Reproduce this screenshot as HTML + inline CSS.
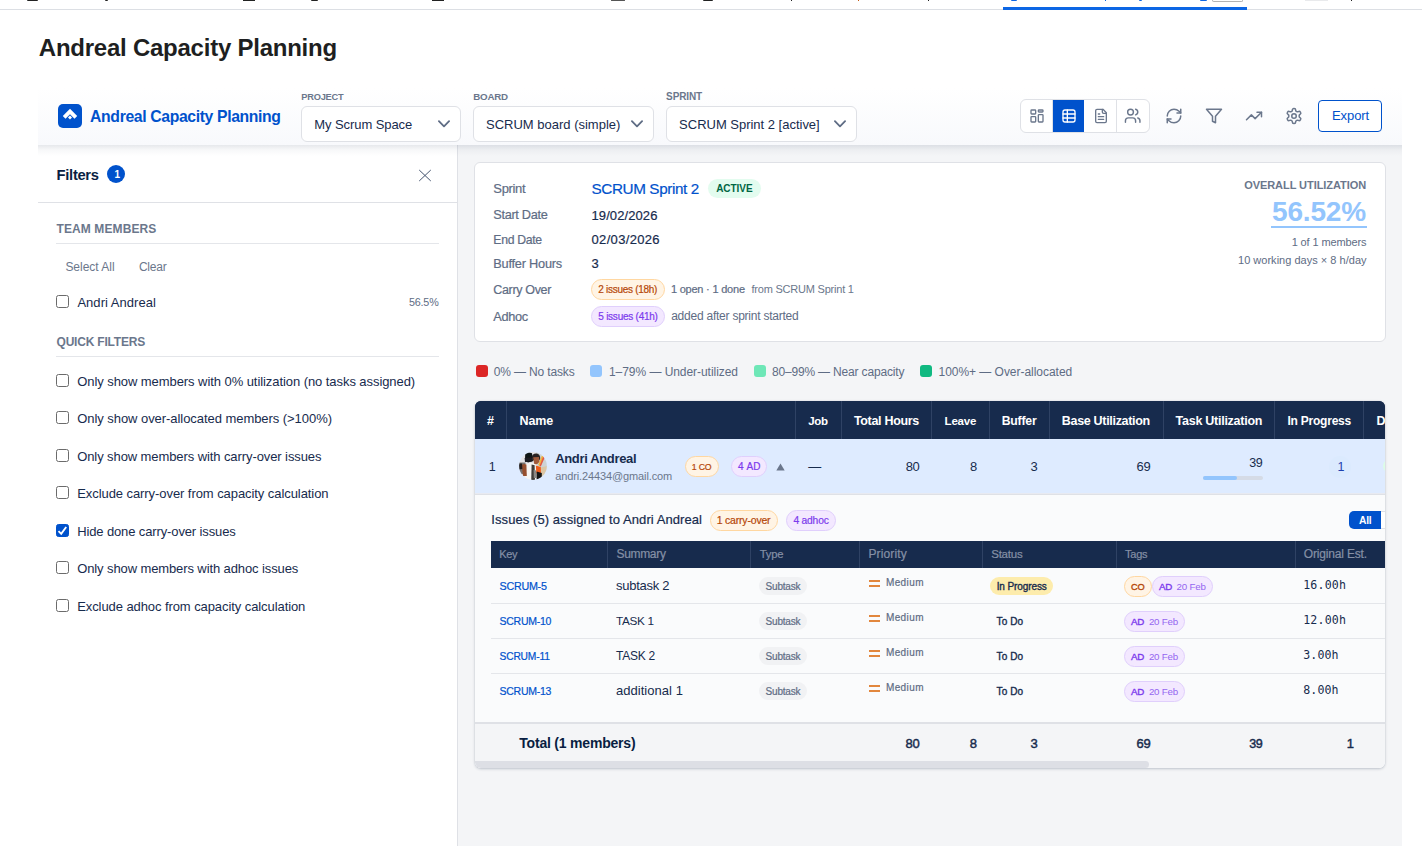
<!DOCTYPE html>
<html lang="en">
<head>
<meta charset="utf-8">
<title>Andreal Capacity Planning</title>
<style>
*{box-sizing:border-box;margin:0;padding:0}
html,body{width:1422px;height:846px;overflow:hidden;background:#fff}
body{font-family:"Liberation Sans",sans-serif;color:#172b4d;position:relative;font-size:13px}
.abs{position:absolute}
.t{position:absolute;white-space:nowrap}
#strip{left:0;top:0;width:1422px;height:10px;border-bottom:1px solid #dcdfe4;overflow:hidden}
#strip i{position:absolute;display:block;background:#222;top:0}
#tabline{left:1002.5px;top:7px;width:244.5px;height:3px;background:#0c66e4}
#toolbar{left:38px;top:88px;width:1364px;height:57px;background:linear-gradient(#fff,#f8f9fc)}
#logo{left:58px;top:104px;width:24px;height:24px;border-radius:5px;background:#0052cc}
.sel{position:absolute;top:106px;height:36px;border:1px solid #dfe1e6;border-radius:6px;background:#fff}
.sel svg{position:absolute;right:9px;top:11px}
#vgroup{left:1020px;top:99px;width:130px;height:34px;border:1px solid #dfe1e6;border-radius:6px;background:#fff;overflow:hidden}
#vgroup div{position:absolute;top:0;height:32px;width:32px;border-right:1px solid #dfe1e6}
#vgroup svg{position:absolute;left:8px;top:8px}
.ico{position:absolute;width:18px;height:18px}
svg.l{fill:none;stroke:#6b778c;stroke-width:2;stroke-linecap:round;stroke-linejoin:round}
#export{left:1318px;top:100px;width:64px;height:32px;border:1px solid #0052cc;border-radius:4px;background:#fff}
#fpanel{left:38px;top:145px;width:420px;height:701px;background:#fff;border-right:1px solid #dfe1e6}
#fhead{left:38px;top:202px;width:419px;height:1px;background:#dfe1e6}
.hr{position:absolute;left:56px;width:383px;height:1px;background:#e4e6ea}
.cb{position:absolute;left:56px;width:13px;height:13px;border:1px solid #6b6b6b;border-radius:2.5px;background:#fff}
.cb.on{background:#0052cc;border-color:#0052cc}
#content{left:458px;top:145px;width:944px;height:701px;background:#f4f5f7}
#card{left:474px;top:162px;width:912px;height:180px;background:#fff;border:1px solid #dfe1e6;border-radius:6px}
.pill{position:absolute;border-radius:11px}
.co{background:#fff4e5;border:1px solid #ffd7a1}
.ad{background:#f3e8ff;border:1px solid #e0cffc}
.sw{position:absolute;top:365px;width:12px;height:12px;border-radius:3px}
#tbl{left:475px;top:401px;width:910px;height:367px;background:linear-gradient(#172b4d 0,#172b4d 38px,#fafbfc 38px);border-radius:6px;overflow:hidden;box-shadow:0 1px 3px rgba(9,30,66,.22),0 0 1px rgba(9,30,66,.2)}
#th{left:0;top:0;width:911px;height:38px;background:#172b4d}
#th i{position:absolute;top:0;width:1px;height:38px;background:#2f4264}
#row{left:0;top:38px;width:911px;height:56px;background:linear-gradient(#deebff 0,#deebff 54px,#e8eaf1 54px,#e8eaf1 55px,#dfe1e6 55px,#dfe1e6 56px)}
#sub{left:16px;top:140px;width:895px;height:27px;background:#172b4d}
#sub i{position:absolute;top:0;width:1px;height:27px;background:#2f4264}
.ir{position:absolute;left:16px;width:895px;height:1px;background:#e4e6ea}
.ty{position:absolute;left:284px;width:48px;height:18px;border-radius:9px;background:#f1f2f4}
.eq{position:absolute;left:394px;width:11px;height:7px;border-top:2px solid #e2873d;border-bottom:2px solid #e2873d}
#tot{left:0;top:321px;width:911px;height:46px;background:#f4f5f7;border-top:2px solid #dfe1e6}
</style>
</head>
<body>
<div id="strip" class="abs">
<i style="left:27px;width:11px;height:1.2px;border-radius:0 0 6px 6px"></i>
<i style="left:104.5px;width:3px;height:1.2px;border-radius:0 0 2px 2px"></i>
<i style="left:243px;width:11.5px;height:1.0px"></i>
<i style="left:310.5px;width:7px;height:1.3px;border-radius:0 0 4px 4px"></i>
<i style="left:432px;width:11.5px;height:1.0px"></i>
<i style="left:610.5px;width:14px;height:1.3px;background:#f1f1f1;border:1px solid #555;border-top:0;border-radius:0 0 2px 2px"></i>
<i style="left:703px;width:10px;height:1.2px;border-radius:0 0 5px 5px"></i>
<i style="left:790.5px;width:1.2px;height:1.2px"></i>
<i style="left:857.5px;width:1.2px;height:1.2px;background:#c75b12"></i>
<i style="left:927.5px;width:1.2px;height:1.2px"></i>
<i style="left:1010.5px;width:6px;height:1.3px;background:#0c66e4;border-radius:0 0 3px 3px"></i>
<i style="left:1105px;width:1.3px;height:1.2px;background:#0c66e4"></i>
<i style="left:1139px;width:3px;height:1.2px;background:#0c66e4;border-radius:0 0 2px 2px"></i>
<i style="left:1199.5px;width:7px;height:1.3px;background:#0c66e4;border-radius:0 0 4px 4px"></i>
<i style="left:1211.5px;width:31px;height:1.5px;background:#fff;border:1px solid #b3b3b3;border-top:0;border-radius:0 0 3px 3px"></i>
<i style="left:1305px;width:23px;height:1.2px;background:#e9eaec"></i>
<i style="left:1351px;width:1.2px;height:1.2px"></i>
</div>
<div id="tabline" class="abs"></div>

<div id="toolbar" class="abs"></div>
<div id="logo" class="abs"><svg width="24" height="24" viewBox="0 0 24 24"><path d="M12 4.8 L19.2 12 L16.5 14.7 L12 10.2 L7.5 14.7 L4.8 12 Z" fill="#fff"/><path d="M12 11.4 L14 13.4 L12 15.4 L10 13.4 Z" fill="#fff"/></svg></div>

<div class="sel" style="left:301px;width:160px"><svg width="14" height="14" viewBox="0 0 14 14"><path d="M1.9 3.2 L7 8.4 L12.1 3.2" fill="none" stroke="#5e6c84" stroke-width="1.8" stroke-linecap="round" stroke-linejoin="round"/></svg></div>
<div class="sel" style="left:473px;width:181px"><svg width="14" height="14" viewBox="0 0 14 14"><path d="M1.9 3.2 L7 8.4 L12.1 3.2" fill="none" stroke="#5e6c84" stroke-width="1.8" stroke-linecap="round" stroke-linejoin="round"/></svg></div>
<div class="sel" style="left:666px;width:191px"><svg width="14" height="14" viewBox="0 0 14 14"><path d="M1.9 3.2 L7 8.4 L12.1 3.2" fill="none" stroke="#5e6c84" stroke-width="1.8" stroke-linecap="round" stroke-linejoin="round"/></svg></div>

<div id="vgroup" class="abs">
<div style="left:0"><svg class="l" width="16" height="16" viewBox="0 0 24 24"><rect x="3" y="3" width="7" height="6" rx="1"/><rect x="14" y="3" width="7" height="3" rx="1"/><rect x="14" y="10" width="7" height="11" rx="1"/><rect x="3" y="13" width="7" height="8" rx="1"/></svg></div>
<div style="left:32px;background:#0052cc;border-color:#0052cc;width:31px"><svg class="l" style="stroke:#fff" width="16" height="16" viewBox="0 0 24 24"><rect x="3" y="3" width="18" height="18" rx="3"/><path d="M3 9h18M3 15h18M9.5 3v18"/></svg></div>
<div style="left:64px"><svg class="l" width="16" height="16" viewBox="0 0 24 24"><path d="M15 2H6a2 2 0 0 0-2 2v16a2 2 0 0 0 2 2h12a2 2 0 0 0 2-2V7Z"/><path d="M14 2v4a2 2 0 0 0 2 2h4"/><path d="M10 9H8"/><path d="M16 13H8"/><path d="M16 17H8"/></svg></div>
<div style="left:96px;border-right:0"><svg class="l" style="left:7.3px;top:7.3px" width="17.4" height="17.4" viewBox="0 0 24 24"><path d="M16 21v-2a4 4 0 0 0-4-4H6a4 4 0 0 0-4 4v2"/><circle cx="9" cy="7" r="4"/><path d="M22 21v-2a4 4 0 0 0-3-3.87"/><path d="M16 3.13a4 4 0 0 1 0 7.75"/></svg></div>
</div>
<svg class="ico l" style="left:1165px;top:107px" viewBox="0 0 24 24"><path d="M3 12a9 9 0 0 1 9-9 9.75 9.75 0 0 1 6.74 2.74L21 8"/><path d="M21 3v5h-5"/><path d="M21 12a9 9 0 0 1-9 9 9.75 9.75 0 0 1-6.74-2.74L3 16"/><path d="M8 16H3v5"/></svg>
<svg class="ico l" style="left:1205px;top:107px" viewBox="0 0 24 24"><polygon points="22 3 2 3 10 12.46 10 19 14 21 14 12.46 22 3"/></svg>
<svg class="ico l" style="left:1245px;top:107px" viewBox="0 0 24 24"><polyline points="22 7 13.5 15.5 8.5 10.5 2 17"/><polyline points="16 7 22 7 22 13"/></svg>
<svg class="ico l" style="left:1285px;top:107px" viewBox="0 0 24 24"><path d="M12.22 2h-.44a2 2 0 0 0-2 2v.18a2 2 0 0 1-1 1.73l-.43.25a2 2 0 0 1-2 0l-.15-.08a2 2 0 0 0-2.73.73l-.22.38a2 2 0 0 0 .73 2.73l.15.1a2 2 0 0 1 1 1.72v.51a2 2 0 0 1-1 1.74l-.15.09a2 2 0 0 0-.73 2.73l.22.38a2 2 0 0 0 2.73.73l.15-.08a2 2 0 0 1 2 0l.43.25a2 2 0 0 1 1 1.73V20a2 2 0 0 0 2 2h.44a2 2 0 0 0 2-2v-.18a2 2 0 0 1 1-1.73l.43-.25a2 2 0 0 1 2 0l.15.08a2 2 0 0 0 2.73-.73l.22-.39a2 2 0 0 0-.73-2.73l-.15-.08a2 2 0 0 1-1-1.74v-.5a2 2 0 0 1 1-1.74l.15-.09a2 2 0 0 0 .73-2.73l-.22-.38a2 2 0 0 0-2.73-.73l-.15.08a2 2 0 0 1-2 0l-.43-.25a2 2 0 0 1-1-1.73V4a2 2 0 0 0-2-2z"/><circle cx="12" cy="12" r="3"/></svg>
<div id="export" class="abs"></div>

<div id="fpanel" class="abs"></div>
<div id="content" class="abs"></div>
<div class="abs" style="left:38px;top:145px;width:1364px;height:11px;background:linear-gradient(rgba(9,30,66,.10),rgba(9,30,66,.03) 45%,rgba(9,30,66,0))"></div>
<div class="abs" style="left:107px;top:165px;width:18px;height:18px;border-radius:9px;background:#0052cc"></div>
<svg class="abs" style="left:418px;top:169px" width="14" height="14" viewBox="0 0 14 14"><path d="M1.5 1.3 L12.5 11.7 M12.5 1.3 L1.5 11.7" stroke="#44546f" stroke-width="1" stroke-linecap="round"/></svg>
<div id="fhead" class="abs"></div>
<div class="hr" style="top:243px"></div>
<div class="cb" style="top:295px"></div>
<div class="hr" style="top:356px"></div>
<div class="cb" style="top:374px"></div>
<div class="cb" style="top:411px"></div>
<div class="cb" style="top:449px"></div>
<div class="cb" style="top:486px"></div>
<div class="cb on" style="top:524px"><svg style="position:absolute;left:-1px;top:-1px" width="13" height="13" viewBox="0 0 13 13"><path d="M2.5 7.2 L5.2 9.9 L10.2 3" fill="none" stroke="#fff" stroke-width="1.9" stroke-linecap="butt" stroke-linejoin="miter"/></svg></div>
<div class="cb" style="top:561px"></div>
<div class="cb" style="top:599px"></div>

<div id="card" class="abs"></div>
<div class="abs" style="left:708px;top:179px;width:53px;height:19px;border-radius:10px;background:#e3fcef"></div>
<div class="pill co" style="left:591px;top:279px;width:74px;height:21px"></div>
<div class="pill ad" style="left:591px;top:306px;width:74px;height:21px"></div>
<div class="abs" style="left:1271px;top:226px;width:96px;height:2px;background:#93c5fd"></div>

<div class="sw" style="left:476px;background:#dc2626"></div>
<div class="sw" style="left:590px;background:#93c5fd"></div>
<div class="sw" style="left:754px;background:#6ee7b7"></div>
<div class="sw" style="left:920px;background:#10b981"></div>

<div id="tbl" class="abs">
<div id="th" class="abs">
<i style="left:31px"></i><i style="left:320px"></i><i style="left:366px"></i><i style="left:456px"></i><i style="left:514px"></i><i style="left:574px"></i><i style="left:688px"></i><i style="left:799px"></i><i style="left:888px"></i>
<div class="t" style="left:901.5px;top:14px;font-size:12.5px;line-height:12.5px;font-weight:700;color:#fff">Done</div>
</div>
<div id="row" class="abs">
<svg class="abs" style="left:44px;top:13px" width="28" height="28" viewBox="0 0 28 28"><defs><clipPath id="av"><circle cx="14" cy="14" r="13.9"/></clipPath><filter id="bl" x="-20%" y="-20%" width="140%" height="140%"><feGaussianBlur stdDeviation=".75"/></filter></defs><g clip-path="url(#av)"><g filter="url(#bl)"><rect x="-4" y="-4" width="36" height="36" fill="#e4e4e7"/><rect x="17" y="-4" width="16" height="36" fill="#cdd3d5"/><path d="M20 16 L32 13 L32 32 L19 32 Z" fill="#dcc7a6"/><path d="M-2 10.5 L6.5 10.5 L6.5 21 L-2 24 Z" fill="#77726f"/><path d="M6.2 2.4 Q7 -.4 10.4 .4 L13 1.2 L14 9 L9 10.6 L6 8.8 Z" fill="#111216"/><path d="M5.6 6 L13 5.4 L13.4 9.6 L6 10 Z" fill="#1b1c20"/><path d="M12.8 5 Q13.5 1.2 17.4 1.5 Q21.6 2 21.2 7 L20 8.6 L14 8.6 Z" fill="#2a2220"/><path d="M14.2 5.2 L20 5 L20.4 9.8 Q18 13.4 15.2 12 Z" fill="#a05a3a"/><path d="M23 3.4 L25.6 5 L21.4 14.2 L19.2 13 Z" fill="#f0b43a"/><path d="M24.2 4.4 L25.8 5.2 L21.8 14.4 L20.6 13.8 Z" fill="#e2574a"/><path d="M6 12.8 Q9 10.4 13 11 L18 13 L18.4 30 L5.4 30 Z" fill="#f6f5f3"/><path d="M2.8 13 Q5 11.2 7.4 12.4 L7.8 24 L4 24 Z" fill="#96502f"/><path d="M-1 11.4 L3 11.4 L3.4 17 L-1 17.6 Z" fill="#221e1d"/><path d="M12.6 12.4 L15.6 13.2 L16 30 L12.2 30 Z" fill="#3f3c3a"/><path d="M14.6 18 L17.4 18.6 L17.4 26 L14.8 26 Z" fill="#8b8986"/><path d="M16.8 13.4 L21.8 15 L22 22.6 L17.4 21.2 Z" fill="#ee5b1d"/><path d="M17.6 19.6 L22.8 21 L22.8 28 L17.6 28 Z" fill="#121214"/></g></g></svg>
<div class="pill co" style="left:210px;top:17px;width:34px;height:21px"></div>
<div class="pill ad" style="left:256px;top:17px;width:36px;height:21px"></div>
<svg class="abs" style="left:300.5px;top:23.5px" width="9" height="8" viewBox="0 0 9 8"><path d="M4.5 0.5 L8.7 7.5 L0.3 7.5 Z" fill="#6b778c"/></svg>
<div class="abs" style="left:854px;top:16.5px;width:22px;height:22px;border-radius:11px;background:#dbeafe"></div><div class="abs" style="left:907.5px;top:20px;width:22px;height:14px;border-radius:7px;background:#dcfce7"></div><div class="abs" style="left:728px;top:37px;width:60px;height:4px;border-radius:2px;background:#d5dbe6"><div style="width:34px;height:4px;border-radius:2px;background:#93c5fd"></div></div>
</div>
<div class="pill co" style="left:235px;top:109px;width:68px;height:21px"></div>
<div class="pill ad" style="left:311px;top:109px;width:50px;height:21px"></div>
<div class="abs" style="left:874px;top:110px;width:32px;height:18px;border-radius:5px 0 0 5px;background:#0052cc"></div>
<div class="abs" style="left:906px;top:110px;width:10px;height:18px;border:1px solid #dfe1e6;border-left:0;background:#fff"></div>
<div id="sub" class="abs">
<i style="left:116px"></i><i style="left:259px"></i><i style="left:368px"></i><i style="left:491px"></i><i style="left:625px"></i><i style="left:804px"></i>
</div>
<div class="ty" style="top:176px"></div><div class="eq" style="top:179px"></div><div class="abs" style="left:515px;top:176px;width:63px;height:18px;border-radius:9px;background:#fdecac"></div><div class="pill co" style="left:649px;top:175px;width:28px;height:21px"></div><div class="pill ad" style="left:677px;top:175px;width:61px;height:21px"></div><div class="ir" style="top:202px"></div>
<div class="ty" style="top:211px"></div><div class="eq" style="top:214px"></div><div class="pill ad" style="left:649px;top:210px;width:61px;height:21px"></div><div class="ir" style="top:237px"></div>
<div class="ty" style="top:246px"></div><div class="eq" style="top:249px"></div><div class="pill ad" style="left:649px;top:245px;width:61px;height:21px"></div><div class="ir" style="top:272px"></div>
<div class="ty" style="top:281px"></div><div class="eq" style="top:284px"></div><div class="pill ad" style="left:649px;top:280px;width:61px;height:21px"></div>
<div id="tot" class="abs"></div>
<div class="abs" style="left:0;top:360px;width:674px;height:7px;background:#dddfe5;border-radius:0 4px 4px 0"></div>
</div>
<div class="t" style="left:38.80px;top:36px;font-size:24px;line-height:24px;color:#1e1f21;font-weight:700;letter-spacing:-0.241px;">Andreal Capacity Planning</div>
<div class="t" style="left:90.10px;top:109px;font-size:15.75px;line-height:15.75px;color:#0052cc;font-weight:700;letter-spacing:-0.361px;">Andreal Capacity Planning</div>
<div class="t" style="left:301.30px;top:93px;font-size:9.25px;line-height:9.25px;color:#6b778c;font-weight:700;letter-spacing:-0.234px;">PROJECT</div>
<div class="t" style="left:473.30px;top:92px;font-size:9.75px;line-height:9.75px;color:#6b778c;font-weight:700;letter-spacing:-0.233px;">BOARD</div>
<div class="t" style="left:666.10px;top:92px;font-size:10px;line-height:10px;color:#6b778c;font-weight:700;letter-spacing:-0.110px;">SPRINT</div>
<div class="t" style="left:314.30px;top:118px;font-size:13px;line-height:13px;color:#172b4d;letter-spacing:-0.077px;">My Scrum Space</div>
<div class="t" style="left:486.00px;top:118px;font-size:13px;line-height:13px;color:#172b4d;">SCRUM board (simple)</div>
<div class="t" style="left:679.10px;top:118px;font-size:13px;line-height:13px;color:#172b4d;letter-spacing:-0.012px;">SCRUM Sprint 2 [active]</div>
<div class="t" style="left:1332.00px;top:109px;font-size:13px;line-height:13px;color:#0052cc;letter-spacing:-0.074px;">Export</div>
<div class="t" style="left:56.60px;top:168px;font-size:14.75px;line-height:14.75px;color:#091e42;font-weight:700;letter-spacing:-0.308px;">Filters</div>
<div class="t" style="left:114.60px;top:170px;font-size:10px;line-height:10px;color:#fff;font-weight:700;">1</div>
<div class="t" style="left:56.50px;top:223px;font-size:12px;line-height:12px;color:#6b778c;font-weight:700;letter-spacing:0.100px;">TEAM MEMBERS</div>
<div class="t" style="left:65.40px;top:261px;font-size:12px;line-height:12px;color:#6b778c;letter-spacing:-0.020px;">Select All</div>
<div class="t" style="left:138.90px;top:261px;font-size:12px;line-height:12px;color:#6b778c;letter-spacing:-0.220px;">Clear</div>
<div class="t" style="left:77.40px;top:296px;font-size:13px;line-height:13px;color:#172b4d;letter-spacing:0.036px;">Andri Andreal</div>
<div class="t" style="left:409.00px;top:297px;font-size:10.75px;line-height:10.75px;color:#5e6c84;letter-spacing:-0.194px;">56.5%</div>
<div class="t" style="left:56.50px;top:336px;font-size:12px;line-height:12px;color:#6b778c;font-weight:700;letter-spacing:-0.198px;">QUICK FILTERS</div>
<div class="t" style="left:77.20px;top:375px;font-size:13px;line-height:13px;color:#172b4d;letter-spacing:-0.067px;">Only show members with 0% utilization (no tasks assigned)</div>
<div class="t" style="left:77.20px;top:412px;font-size:13px;line-height:13px;color:#172b4d;letter-spacing:-0.053px;">Only show over-allocated members (&gt;100%)</div>
<div class="t" style="left:77.20px;top:450px;font-size:13px;line-height:13px;color:#172b4d;letter-spacing:-0.089px;">Only show members with carry-over issues</div>
<div class="t" style="left:77.20px;top:487px;font-size:13px;line-height:13px;color:#172b4d;letter-spacing:-0.068px;">Exclude carry-over from capacity calculation</div>
<div class="t" style="left:77.20px;top:525px;font-size:13px;line-height:13px;color:#172b4d;letter-spacing:-0.125px;">Hide done carry-over issues</div>
<div class="t" style="left:77.20px;top:562px;font-size:13px;line-height:13px;color:#172b4d;letter-spacing:-0.106px;">Only show members with adhoc issues</div>
<div class="t" style="left:77.20px;top:600px;font-size:13px;line-height:13px;color:#172b4d;letter-spacing:-0.081px;">Exclude adhoc from capacity calculation</div>
<div class="t" style="left:493.30px;top:182px;font-size:13px;line-height:13px;color:#5e6c84;letter-spacing:-0.326px;-webkit-text-stroke:.2px currentColor;">Sprint</div>
<div class="t" style="left:493.30px;top:209px;font-size:12.75px;line-height:12.75px;color:#5e6c84;letter-spacing:-0.331px;-webkit-text-stroke:.2px currentColor;">Start Date</div>
<div class="t" style="left:493.30px;top:234px;font-size:12.25px;line-height:12.25px;color:#5e6c84;letter-spacing:-0.326px;-webkit-text-stroke:.2px currentColor;">End Date</div>
<div class="t" style="left:493.30px;top:258px;font-size:12.75px;line-height:12.75px;color:#5e6c84;letter-spacing:-0.221px;-webkit-text-stroke:.2px currentColor;">Buffer Hours</div>
<div class="t" style="left:493.30px;top:284px;font-size:12.5px;line-height:12.5px;color:#5e6c84;letter-spacing:-0.336px;-webkit-text-stroke:.2px currentColor;">Carry Over</div>
<div class="t" style="left:493.30px;top:311px;font-size:12.75px;line-height:12.75px;color:#5e6c84;letter-spacing:-0.337px;-webkit-text-stroke:.2px currentColor;">Adhoc</div>
<div class="t" style="left:591.50px;top:181px;font-size:15.25px;line-height:15.25px;color:#0052cc;letter-spacing:-0.384px;-webkit-text-stroke:.2px currentColor;">SCRUM Sprint 2</div>
<div class="t" style="left:716.20px;top:184px;font-size:10px;line-height:10px;color:#006644;font-weight:700;letter-spacing:-0.050px;">ACTIVE</div>
<div class="t" style="left:591.50px;top:209px;font-size:13px;line-height:13px;color:#172b4d;letter-spacing:0.093px;-webkit-text-stroke:.2px currentColor;">19/02/2026</div>
<div class="t" style="left:591.50px;top:233px;font-size:13px;line-height:13px;color:#172b4d;letter-spacing:0.337px;-webkit-text-stroke:.2px currentColor;">02/03/2026</div>
<div class="t" style="left:591.50px;top:257px;font-size:13px;line-height:13px;color:#172b4d;-webkit-text-stroke:.2px currentColor;">3</div>
<div class="t" style="left:598.30px;top:285px;font-size:10px;line-height:10px;color:#b54708;letter-spacing:-0.285px;-webkit-text-stroke:.2px currentColor;">2 issues (18h)</div>
<div class="t" style="left:598.30px;top:312px;font-size:10px;line-height:10px;color:#7c3aed;letter-spacing:-0.246px;-webkit-text-stroke:.2px currentColor;">5 issues (41h)</div>
<div class="t" style="left:670.90px;top:284px;font-size:11px;line-height:11px;color:#5e6c84;letter-spacing:-0.211px;-webkit-text-stroke:.2px currentColor;">1 open · 1 done</div>
<div class="t" style="left:751.50px;top:284px;font-size:11px;line-height:11px;color:#6b778c;letter-spacing:-0.215px;">from SCRUM Sprint 1</div>
<div class="t" style="left:671.20px;top:310px;font-size:12px;line-height:12px;color:#5e6c84;letter-spacing:-0.238px;">added after sprint started</div>
<div class="t" style="left:1244.20px;top:180px;font-size:11px;line-height:11px;color:#6b778c;font-weight:700;letter-spacing:-0.063px;">OVERALL UTILIZATION</div>
<div class="t" style="left:1272.00px;top:198px;font-size:28px;line-height:28px;color:#93c5fd;font-weight:700;letter-spacing:-0.164px;">56.52%</div>
<div class="t" style="left:1291.70px;top:237px;font-size:11px;line-height:11px;color:#5e6c84;letter-spacing:-0.123px;">1 of 1 members</div>
<div class="t" style="left:1238.00px;top:255px;font-size:11px;line-height:11px;color:#5e6c84;letter-spacing:0.017px;">10 working days × 8 h/day</div>
<div class="t" style="left:493.80px;top:366px;font-size:12px;line-height:12px;color:#5e6c84;letter-spacing:-0.148px;">0% — No tasks</div>
<div class="t" style="left:609.00px;top:366px;font-size:12px;line-height:12px;color:#5e6c84;letter-spacing:-0.051px;">1–79% — Under-utilized</div>
<div class="t" style="left:771.90px;top:366px;font-size:12px;line-height:12px;color:#5e6c84;letter-spacing:-0.170px;">80–99% — Near capacity</div>
<div class="t" style="left:938.50px;top:366px;font-size:12px;line-height:12px;color:#5e6c84;letter-spacing:-0.033px;">100%+ — Over-allocated</div>
<div class="t" style="left:487.00px;top:415px;font-size:12.5px;line-height:12.5px;color:#fff;font-weight:700;">#</div>
<div class="t" style="left:519.60px;top:415px;font-size:12.5px;line-height:12.5px;color:#fff;font-weight:700;letter-spacing:-0.154px;">Name</div>
<div class="t" style="left:808.30px;top:416px;font-size:11.5px;line-height:11.5px;color:#fff;font-weight:700;letter-spacing:-0.335px;">Job</div>
<div class="t" style="left:853.90px;top:415px;font-size:12.5px;line-height:12.5px;color:#fff;font-weight:700;letter-spacing:-0.310px;">Total Hours</div>
<div class="t" style="left:944.60px;top:416px;font-size:11.5px;line-height:11.5px;color:#fff;font-weight:700;letter-spacing:-0.201px;">Leave</div>
<div class="t" style="left:1001.70px;top:415px;font-size:12.25px;line-height:12.25px;color:#fff;font-weight:700;letter-spacing:-0.215px;">Buffer</div>
<div class="t" style="left:1061.80px;top:415px;font-size:12.5px;line-height:12.5px;color:#fff;font-weight:700;letter-spacing:-0.311px;">Base Utilization</div>
<div class="t" style="left:1175.60px;top:415px;font-size:12.5px;line-height:12.5px;color:#fff;font-weight:700;letter-spacing:-0.263px;">Task Utilization</div>
<div class="t" style="left:1287.50px;top:415px;font-size:12px;line-height:12px;color:#fff;font-weight:700;letter-spacing:-0.230px;">In Progress</div>
<div class="t" style="left:488.80px;top:461px;font-size:12.5px;line-height:12.5px;color:#172b4d;">1</div>
<div class="t" style="left:555.20px;top:452px;font-size:13px;line-height:13px;color:#172b4d;font-weight:700;letter-spacing:-0.340px;">Andri Andreal</div>
<div class="t" style="left:555.20px;top:471px;font-size:11px;line-height:11px;color:#6b778c;letter-spacing:-0.120px;">andri.24434@gmail.com</div>
<div class="t" style="left:691.70px;top:463px;font-size:8.75px;line-height:8.75px;color:#b54708;letter-spacing:-0.144px;-webkit-text-stroke:.2px currentColor;">1 CO</div>
<div class="t" style="left:738.00px;top:462px;font-size:10px;line-height:10px;color:#7c3aed;letter-spacing:0.300px;-webkit-text-stroke:.2px currentColor;">4 AD</div>
<div class="t" style="left:808.20px;top:460px;font-size:13px;line-height:13px;color:#172b4d;">—</div>
<div class="t" style="left:905.70px;top:460px;font-size:13px;line-height:13px;color:#172b4d;letter-spacing:-0.330px;">80</div>
<div class="t" style="left:969.90px;top:460px;font-size:13px;line-height:13px;color:#172b4d;">8</div>
<div class="t" style="left:1030.50px;top:460px;font-size:13px;line-height:13px;color:#172b4d;">3</div>
<div class="t" style="left:1136.60px;top:460px;font-size:13px;line-height:13px;color:#172b4d;letter-spacing:-0.230px;">69</div>
<div class="t" style="left:1249.20px;top:457px;font-size:12.5px;line-height:12.5px;color:#172b4d;letter-spacing:-0.375px;">39</div>
<div class="t" style="left:1337.40px;top:461px;font-size:12.5px;line-height:12.5px;color:#1e40af;">1</div>
<div class="t" style="left:491.30px;top:513px;font-size:13px;line-height:13px;color:#172b4d;letter-spacing:0.073px;-webkit-text-stroke:.2px currentColor;">Issues (5) assigned to Andri Andreal</div>
<div class="t" style="left:716.70px;top:515px;font-size:10.5px;line-height:10.5px;color:#b54708;letter-spacing:-0.193px;-webkit-text-stroke:.2px currentColor;">1 carry-over</div>
<div class="t" style="left:793.40px;top:516px;font-size:10.25px;line-height:10.25px;color:#7c3aed;letter-spacing:-0.182px;-webkit-text-stroke:.2px currentColor;">4 adhoc</div>
<div class="t" style="left:1359.10px;top:516px;font-size:10.25px;line-height:10.25px;color:#fff;font-weight:700;letter-spacing:-0.260px;">All</div>
<div class="t" style="left:499.30px;top:549px;font-size:11px;line-height:11px;color:#8590a6;letter-spacing:-0.337px;-webkit-text-stroke:.2px currentColor;">Key</div>
<div class="t" style="left:616.50px;top:548px;font-size:12px;line-height:12px;color:#8590a6;letter-spacing:-0.327px;-webkit-text-stroke:.2px currentColor;">Summary</div>
<div class="t" style="left:759.80px;top:549px;font-size:11.25px;line-height:11.25px;color:#8590a6;letter-spacing:-0.204px;-webkit-text-stroke:.2px currentColor;">Type</div>
<div class="t" style="left:868.40px;top:548px;font-size:12px;line-height:12px;color:#8590a6;letter-spacing:0.140px;-webkit-text-stroke:.2px currentColor;">Priority</div>
<div class="t" style="left:991.20px;top:549px;font-size:11.5px;line-height:11.5px;color:#8590a6;letter-spacing:-0.220px;-webkit-text-stroke:.2px currentColor;">Status</div>
<div class="t" style="left:1125.00px;top:549px;font-size:11px;line-height:11px;color:#8590a6;letter-spacing:-0.237px;-webkit-text-stroke:.2px currentColor;">Tags</div>
<div class="t" style="left:1303.80px;top:548px;font-size:12px;line-height:12px;color:#8590a6;letter-spacing:-0.178px;-webkit-text-stroke:.2px currentColor;">Original Est.</div>
<div class="t" style="left:499.50px;top:581px;font-size:10.75px;line-height:10.75px;color:#0052cc;letter-spacing:-0.261px;-webkit-text-stroke:.2px currentColor;">SCRUM-5</div>
<div class="t" style="left:616.00px;top:579px;font-size:13px;line-height:13px;color:#172b4d;letter-spacing:-0.255px;">subtask 2</div>
<div class="t" style="left:765.60px;top:582px;font-size:10px;line-height:10px;color:#5e6c84;letter-spacing:-0.200px;-webkit-text-stroke:.2px currentColor;">Subtask</div>
<div class="t" style="left:885.90px;top:578px;font-size:10px;line-height:10px;color:#5e6c84;letter-spacing:0.410px;-webkit-text-stroke:.2px currentColor;">Medium</div>
<div class="t" style="left:996.70px;top:582px;font-size:10px;line-height:10px;color:#172b4d;letter-spacing:-0.105px;-webkit-text-stroke:.35px currentColor;">In Progress</div>
<div class="t" style="left:1131.00px;top:583px;font-size:9.25px;line-height:9.25px;color:#b54708;letter-spacing:-0.175px;-webkit-text-stroke:.35px currentColor;">CO</div>
<div class="t" style="left:1159.10px;top:582px;font-size:9.75px;line-height:9.75px;color:#7c3aed;letter-spacing:-0.352px;-webkit-text-stroke:.35px currentColor;">AD</div>
<div class="t" style="left:1176.60px;top:582px;font-size:9.75px;line-height:9.75px;color:#9466f0;letter-spacing:-0.194px;">20 Feb</div>
<div class="t" style="left:1303.20px;top:580px;font-size:11.6px;line-height:11.6px;color:#172b4d;font-family:'DejaVu Sans Mono','Liberation Mono',monospace;letter-spacing:0.185px;">16.00h</div>
<div class="t" style="left:499.50px;top:616px;font-size:10.5px;line-height:10.5px;color:#0052cc;letter-spacing:-0.251px;-webkit-text-stroke:.2px currentColor;">SCRUM-10</div>
<div class="t" style="left:616.00px;top:615px;font-size:11.75px;line-height:11.75px;color:#172b4d;letter-spacing:-0.299px;">TASK 1</div>
<div class="t" style="left:765.60px;top:617px;font-size:10px;line-height:10px;color:#5e6c84;letter-spacing:-0.200px;-webkit-text-stroke:.2px currentColor;">Subtask</div>
<div class="t" style="left:885.90px;top:613px;font-size:10px;line-height:10px;color:#5e6c84;letter-spacing:0.410px;-webkit-text-stroke:.2px currentColor;">Medium</div>
<div class="t" style="left:996.60px;top:617px;font-size:10px;line-height:10px;color:#172b4d;letter-spacing:0.075px;-webkit-text-stroke:.35px currentColor;">To Do</div>
<div class="t" style="left:1131.00px;top:617px;font-size:9.75px;line-height:9.75px;color:#7c3aed;letter-spacing:-0.352px;-webkit-text-stroke:.35px currentColor;">AD</div>
<div class="t" style="left:1148.90px;top:617px;font-size:9.75px;line-height:9.75px;color:#9466f0;letter-spacing:-0.194px;">20 Feb</div>
<div class="t" style="left:1303.20px;top:615px;font-size:11.6px;line-height:11.6px;color:#172b4d;font-family:'DejaVu Sans Mono','Liberation Mono',monospace;letter-spacing:0.185px;">12.00h</div>
<div class="t" style="left:499.50px;top:652px;font-size:10.25px;line-height:10.25px;color:#0052cc;letter-spacing:-0.180px;-webkit-text-stroke:.2px currentColor;">SCRUM-11</div>
<div class="t" style="left:616.00px;top:650px;font-size:12px;line-height:12px;color:#172b4d;letter-spacing:-0.268px;">TASK 2</div>
<div class="t" style="left:765.60px;top:652px;font-size:10px;line-height:10px;color:#5e6c84;letter-spacing:-0.200px;-webkit-text-stroke:.2px currentColor;">Subtask</div>
<div class="t" style="left:885.90px;top:648px;font-size:10px;line-height:10px;color:#5e6c84;letter-spacing:0.410px;-webkit-text-stroke:.2px currentColor;">Medium</div>
<div class="t" style="left:996.60px;top:652px;font-size:10px;line-height:10px;color:#172b4d;letter-spacing:0.075px;-webkit-text-stroke:.35px currentColor;">To Do</div>
<div class="t" style="left:1131.00px;top:652px;font-size:9.75px;line-height:9.75px;color:#7c3aed;letter-spacing:-0.352px;-webkit-text-stroke:.35px currentColor;">AD</div>
<div class="t" style="left:1148.90px;top:652px;font-size:9.75px;line-height:9.75px;color:#9466f0;letter-spacing:-0.194px;">20 Feb</div>
<div class="t" style="left:1303.20px;top:650px;font-size:11.6px;line-height:11.6px;color:#172b4d;font-family:'DejaVu Sans Mono','Liberation Mono',monospace;letter-spacing:0.121px;">3.00h</div>
<div class="t" style="left:499.50px;top:686px;font-size:10.5px;line-height:10.5px;color:#0052cc;letter-spacing:-0.251px;-webkit-text-stroke:.2px currentColor;">SCRUM-13</div>
<div class="t" style="left:616.00px;top:684px;font-size:13px;line-height:13px;color:#172b4d;letter-spacing:0.037px;">additional 1</div>
<div class="t" style="left:765.60px;top:687px;font-size:10px;line-height:10px;color:#5e6c84;letter-spacing:-0.200px;-webkit-text-stroke:.2px currentColor;">Subtask</div>
<div class="t" style="left:885.90px;top:683px;font-size:10px;line-height:10px;color:#5e6c84;letter-spacing:0.410px;-webkit-text-stroke:.2px currentColor;">Medium</div>
<div class="t" style="left:996.60px;top:687px;font-size:10px;line-height:10px;color:#172b4d;letter-spacing:0.075px;-webkit-text-stroke:.35px currentColor;">To Do</div>
<div class="t" style="left:1131.00px;top:687px;font-size:9.75px;line-height:9.75px;color:#7c3aed;letter-spacing:-0.352px;-webkit-text-stroke:.35px currentColor;">AD</div>
<div class="t" style="left:1148.90px;top:687px;font-size:9.75px;line-height:9.75px;color:#9466f0;letter-spacing:-0.194px;">20 Feb</div>
<div class="t" style="left:1303.20px;top:685px;font-size:11.6px;line-height:11.6px;color:#172b4d;font-family:'DejaVu Sans Mono','Liberation Mono',monospace;letter-spacing:0.121px;">8.00h</div>
<div class="t" style="left:519.30px;top:736px;font-size:14px;line-height:14px;color:#091e42;font-weight:700;letter-spacing:-0.204px;">Total (1 members)</div>
<div class="t" style="left:905.40px;top:737px;font-size:13px;line-height:13px;color:#172b4d;letter-spacing:-0.230px;-webkit-text-stroke:.45px currentColor;">80</div>
<div class="t" style="left:969.80px;top:737px;font-size:13px;line-height:13px;color:#172b4d;-webkit-text-stroke:.45px currentColor;">8</div>
<div class="t" style="left:1030.50px;top:737px;font-size:13px;line-height:13px;color:#172b4d;-webkit-text-stroke:.45px currentColor;">3</div>
<div class="t" style="left:1136.60px;top:737px;font-size:13px;line-height:13px;color:#172b4d;letter-spacing:-0.230px;-webkit-text-stroke:.45px currentColor;">69</div>
<div class="t" style="left:1249.20px;top:738px;font-size:12.5px;line-height:12.5px;color:#172b4d;letter-spacing:-0.375px;-webkit-text-stroke:.45px currentColor;">39</div>
<div class="t" style="left:1346.80px;top:737px;font-size:13px;line-height:13px;color:#172b4d;-webkit-text-stroke:.45px currentColor;">1</div>
</body>
</html>
